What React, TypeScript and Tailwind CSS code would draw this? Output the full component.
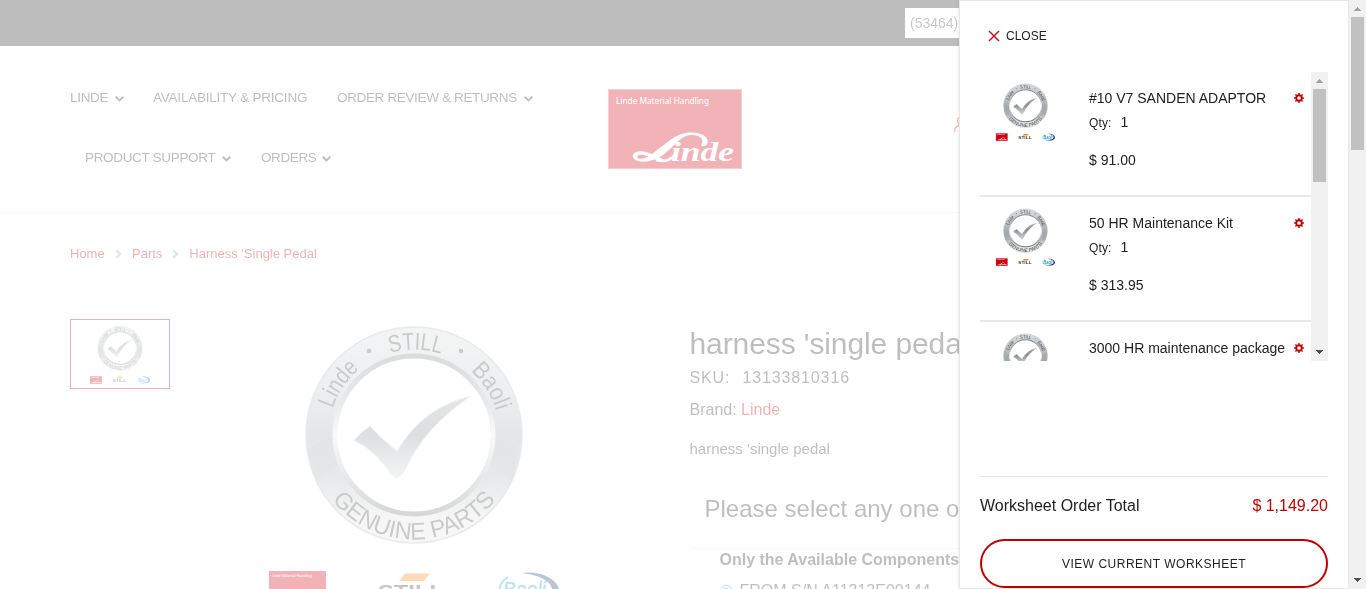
import React from "react";

const sans = "font-['Liberation_Sans',Arial,sans-serif]";

function Defs() {
  return (
    <svg width="0" height="0" className="absolute">
      <defs>
        <linearGradient id="ring" x1="0" y1="0" x2="0" y2="1">
          <stop offset="0" stopColor="#d8dadb" />
          <stop offset="0.3" stopColor="#c3c7ca" />
          <stop offset="0.5" stopColor="#a6abaf" />
          <stop offset="0.7" stopColor="#b0b4b8" />
          <stop offset="0.88" stopColor="#dfe0e0" />
          <stop offset="1" stopColor="#e5e5e5" />
        </linearGradient>
        <linearGradient id="bevel" x1="0" y1="0" x2="0" y2="1">
          <stop offset="0" stopColor="#86888a" />
          <stop offset="0.3" stopColor="#b4b7b9" />
          <stop offset="0.5" stopColor="#eeeeee" />
          <stop offset="0.75" stopColor="#b4b7b9" />
          <stop offset="1" stopColor="#77797b" />
        </linearGradient>
        <linearGradient id="tick" x1="0" y1="0" x2="0" y2="1">
          <stop offset="0" stopColor="#a9abad" />
          <stop offset="0.45" stopColor="#8c9093" />
          <stop offset="1" stopColor="#d8dadb" />
        </linearGradient>
        <path id="arc-top" d="M0 85.5 A85.5 85.5 0 0 1 0 -85.5 A85.5 85.5 0 0 1 0 85.5" />
        <path id="arc-bottom" d="M-104.5 0 A104.5 104.5 0 0 0 104.5 0" />
      </defs>
    </svg>
  );
}

function LindeMark() {
  return (
    <g>
      <path
        d="M49 61 C58 55 67 45 80 43.5 C94 42.500 101 48 99.500 54 C98.500 58 94 58 93 56 C97 51 93 46 83 46 C73 46 66 58 55 66 C48 71 38 74 30 72 C23 70 23 64 30 62.500 C40 61 50 69 60 72 C54 74.500 46 70 39 67 C33 64.500 29 66 29 68 C30 71 38 70 43 66 Z"
        fill="#fff"
      />
      <path d="M48 71 C56 73.500 62 71 66 67" stroke="#fff" strokeWidth="2.500" fill="none" />
      <text
        x="63"
        y="71.500"
        fill="#fff"
        fontFamily="Liberation Serif, serif"
        fontStyle="italic"
        fontWeight="700"
        fontSize="27"
        textLength="63"
        lengthAdjust="spacingAndGlyphs"
      >
        inde
      </text>
    </g>
  );
}

function LindeLogo() {
  return (
    <svg width="134" height="80" viewBox="0 0 134 80">
      <rect x="0.500" y="0.500" width="133" height="79" fill="#d10010" />
      <rect x="0.500" y="0.500" width="133" height="79" fill="none" stroke="#e55a68" />
      <text
        x="8"
        y="15"
        fill="#fff"
        fontFamily="Noto Sans, sans-serif"
        fontSize="9"
        textLength="93"
        lengthAdjust="spacingAndGlyphs"
      >
        Linde Material Handling
      </text>
      <LindeMark />
    </svg>
  );
}

function Seal({ width, height }: { width: number; height: number }) {
  return (
    <svg width={width} height={height} viewBox="-150 -112 300 290" className="block shrink-0">
      <circle r="108" fill="url(#ring)" stroke="#b4b7b8" strokeWidth="1.500" />
      <path d="M-106 14 L-80 0 L-76 30 L-98 46 Z M106 14 L80 0 L76 30 L98 46 Z" fill="#8e9396" opacity="0.2" />
      <circle r="79" fill="#fff" stroke="url(#bevel)" strokeWidth="5" />
      <path
        d="M-60 5.500 C-54 -2 -50 -4 -44 -9 C-35 1 -26 9 -17 16 C2 -15 25 -31 57 -39 C27 -18 8 1 -8 33 C-13 43 -18 46 -23 39 C-34 24 -44 13 -60 5.500 Z"
        fill="url(#tick)"
        stroke="#d5d7d8"
        strokeWidth="1"
      />
      <g fill="#4b4d4f" fontFamily="Liberation Sans, sans-serif" fontSize="24" textAnchor="middle">
        <text textLength="48" lengthAdjust="spacingAndGlyphs">
          <textPath href="#arc-top" startOffset="34.500%">Linde</textPath>
        </text>
        <text textLength="52" lengthAdjust="spacingAndGlyphs">
          <textPath href="#arc-top" startOffset="50.300%">STILL</textPath>
        </text>
        <text textLength="48" lengthAdjust="spacingAndGlyphs">
          <textPath href="#arc-top" startOffset="66%">Baoli</textPath>
        </text>
        <text textLength="188" lengthAdjust="spacingAndGlyphs">
          <textPath href="#arc-bottom" startOffset="50%">GENUINE PARTS</textPath>
        </text>
        <circle cx="-45" cy="-84" r="2.300" />
        <circle cx="47" cy="-84" r="2.300" />
      </g>
      <g transform="translate(-145.500 135.500) scale(0.43 0.46)">
        <rect width="134" height="80" fill="#d10010" />
        <text x="8" y="15" fill="#fff" fontFamily="Noto Sans, sans-serif" fontSize="9" textLength="93">
          Linde Material Handling
        </text>
        <LindeMark />
      </g>
      <path d="M-15 146 L-9 138.500 H16 L10 146 Z" fill="#f9870f" />
      <text
        x="-36"
        y="163"
        fontFamily="Liberation Sans, sans-serif"
        fontWeight="700"
        fontSize="19"
        fill="#3d3d3d"
        textLength="66"
        lengthAdjust="spacingAndGlyphs"
      >
        STILL
      </text>
      <path
        d="M108 138 C128 135 147 146 145 158 C143 170 112 176 92 166 C112 171 136 167 138 156 C139 147 126 140 108 138 Z"
        fill="#1d3c6e"
      />
      <path d="M92 166 C82 160 84 148 94 142" stroke="#2b9bd6" strokeWidth="2" fill="none" />
      <text
        x="89"
        y="162"
        fontFamily="Liberation Sans, sans-serif"
        fontStyle="italic"
        fontWeight="400"
        fontSize="22"
        fill="#2b9bd6"
        stroke="#2b9bd6"
        strokeWidth="0.500"
        textLength="43"
        lengthAdjust="spacingAndGlyphs"
      >
        Baoli
      </text>
    </svg>
  );
}

function Chevron({ right = false }: { right?: boolean }) {
  return right ? (
    <svg width="7" height="10" viewBox="0 0 7 10" className="mt-px block">
      <path d="M1.200 1.200 L5 5 L1.200 8.800" fill="none" stroke="#a5a5a5" strokeWidth="2.200" />
    </svg>
  ) : (
    <svg width="9" height="6" viewBox="0 0 9 6" className="mt-px block">
      <path d="M0.700 0.800 L4.500 4.500 L8.300 0.800" fill="none" stroke="#272727" strokeWidth="1.900" />
    </svg>
  );
}

function NavItem({ label, width, menu = true }: { label: string; width: string; menu?: boolean }) {
  return (
    <a className="flex h-[60px] items-center gap-[7px] whitespace-nowrap text-[13.500px] text-[#272727]">
      <span className={width}>{label}</span>
      {menu && <Chevron />}
    </a>
  );
}

function Arrow({ up = false, color }: { up?: boolean; color: string }) {
  return (
    <svg width="17" height="17" viewBox="0 0 17 17" className="block shrink-0" shapeRendering="crispEdges">
      <path d={up ? "M8 7h1v1h1v1h1v1h1v1H5v-1h1V9h1V8h1z" : "M5 6h7v1h-1v1h-1v1H9v1H8v-1H7V8H6V7H5z"} fill={color} />
    </svg>
  );
}

function Gear() {
  return (
    <svg width="10" height="10" viewBox="-5 -5 10 10" className="block">
      <circle r="2.800" fill="none" stroke="#c00000" strokeWidth="1.900" />
      <g stroke="#c00000" strokeWidth="1.400">
        <path d="M0 -4.900V-3M0 4.900V3M-4.900 0H-3M4.900 0H3M-3.600 -3.600L-2.300 -2.300M3.600 -3.600L2.300 -2.300M-3.600 3.600L-2.300 2.300M3.600 3.600L2.300 2.300" />
      </g>
    </svg>
  );
}

const items = [
  { name: "#10 V7 SANDEN ADAPTOR", qty: 1, price: "$ 91.00" },
  { name: "50 HR Maintenance Kit", qty: 1, price: "$ 313.95" },
  { name: "3000 HR maintenance package", qty: 1, price: "$ 744.25" },
];

function Drawer() {
  return (
    <aside className="absolute top-0 right-0 flex h-[589px] w-[390px] flex-col border border-[#e8e8e8] bg-white pr-5 pl-5 text-[#222] shadow-[0_0_3px_rgba(0,0,0,0.12)]">
      <button className="mt-[25px] flex h-5 items-center gap-[6.5px] self-start pl-[7.5px] text-[12px]">
        <svg width="12" height="12" viewBox="0 0 12 12">
          <path d="M1 1 L11 11 M11 1 L1 11" stroke="#c4161c" strokeWidth="1.500" />
        </svg>
        <span>CLOSE</span>
      </button>
      <div className="mt-[26px] flex h-[289px] w-[348px] shrink-0">
        <div className="h-full w-[331px] overflow-hidden">
          {items.map((it) => (
            <div key={it.name} className="flex h-[125px] border-b-2 border-[#e8e8e8]">
              <div className="w-[109px] pt-[11px] pl-[15px]">
                <Seal width={61} height={59} />
              </div>
              <div className="flex-1 whitespace-nowrap">
                <div className="mt-[17px] text-[14px] leading-[18px]">{it.name}</div>
                <div className="mt-[7px] flex gap-[9px] text-[12px] leading-[17px]">
                  <span className="mt-px tracking-[0.15px]">Qty:</span>
                  <span className="text-[14px]">{it.qty}</span>
                </div>
                <div className="mt-[19px] text-[14px] leading-[18px]">{it.price}</div>
              </div>
              <div className="pt-[21px] pr-[7px]">
                <Gear />
              </div>
            </div>
          ))}
        </div>
        <div className="flex w-[17px] flex-col items-center bg-[#f1f1f1]">
          <Arrow up color="#a3a3a3" />
          <div className="h-[93px] w-[13px] bg-[#c1c1c1]" />
          <div className="flex-1" />
          <Arrow color="#505050" />
        </div>
      </div>
      <div className="mt-[115px] flex justify-between border-t border-[#e8e8e8] pt-[19px] text-[16px] leading-5">
        <span>Worksheet Order Total</span>
        <span className="text-[#c00000]">$ 1,149.20</span>
      </div>
      <button className="mt-[23px] h-[49px] shrink-0 rounded-full border-2 border-[#c00000] text-[12px] tracking-[0.5px]">
        VIEW CURRENT WORKSHEET
      </button>
    </aside>
  );
}

export default function App() {
  return (
    <div className={`flex h-[589px] w-[1366px] overflow-hidden bg-white ${sans}`}>
      <Defs />
      <div className="relative h-full w-[1349px] overflow-hidden">
        <div className="flex h-full flex-col opacity-30">
          <div className="flex h-[46px] shrink-0 bg-[#222] pl-[905px] pt-2">
            <div className="flex h-[30px] w-[360px] items-center bg-white pl-[5px] text-[14px] text-[#444]">
              (53464)
            </div>
          </div>
          <header className="flex h-[167px] shrink-0 border-b border-[#e5e5e5] pl-[70px]">
            <nav className="w-[538px] pt-[22px]">
              <div className="flex gap-[29px]">
                <NavItem label="LINDE" width="w-[38px] tracking-[-0.3px]" />
                <NavItem label="AVAILABILITY & PRICING" width="w-[155px] tracking-[-0.22px]" menu={false} />
                <NavItem label="ORDER REVIEW & RETURNS" width="w-[180px] tracking-[-0.35px]" />
              </div>
              <div className="flex gap-[30px] pl-[15px]">
                <NavItem label="PRODUCT SUPPORT" width="w-[130px] tracking-[-0.33px]" />
                <NavItem label="ORDERS" width="w-[54px] tracking-[-0.4px]" />
              </div>
            </nav>
            <div className="pt-[43px]">
              <LindeLogo />
            </div>
            <svg width="16" height="18" viewBox="0 0 16 18" className="mt-[70px] ml-[212px]">
              <g fill="none" stroke="#d9281e" strokeWidth="1.300">
                <circle cx="7" cy="4.500" r="3.500" />
                <path d="M0.700 16 V14 C1 11 3.500 9.500 7 9.500 C11 9.500 13 11 13.300 14 V16" />
              </g>
            </svg>
          </header>
          <div className="flex h-[80px] shrink-0 items-center gap-[10px] pt-px pl-[70px] text-[13px] text-[#c00000]">
            <span className="w-[35px]">Home</span>
            <Chevron right />
            <span>Parts</span>
            <Chevron right />
            <span>Harness 'Single Pedal</span>
          </div>
          <div className="flex pl-[70px] pt-[26px]">
            <div className="flex h-[70px] w-[100px] justify-center border border-[#c00000] pt-[5px]">
              <Seal width={62} height={60} />
            </div>
            <div className="w-[519px] pt-1 pl-[94px]">
              <Seal width={300} height={290} />
            </div>
            <div className="w-[640px] shrink-0 pl-[0.5px] whitespace-nowrap text-[#272727]">
              <h1 className="mt-[7px] text-[30px] leading-9">
                <span className="tracking-[-0.1px]">harness 'single pedal</span>
              </h1>
              <div className="mt-[6px] flex gap-3 text-[16px] leading-5 tracking-[0.88px]">
                <span>SKU:</span>
                <span>13133810316</span>
              </div>
              <div className="mt-3 text-[16px] leading-5">
                Brand: <span className="text-[#c00000]">Linde</span>
              </div>
              <div className="mt-[19px] text-[15px] leading-5">harness 'single pedal</div>
              <h2 className="mt-[35px] pl-[15px] text-[24px] leading-[29px]">Please select any one of</h2>
              <div className="mt-[25px] border-t border-[#e5e5e5] pl-[30px]">
                <div className="mt-px text-[16px] leading-5 font-bold">Only the Available Components</div>
                <div className="mt-[11px] flex items-center gap-[7px] text-[16px] leading-5">
                  <span className="flex h-[13px] w-[13px] items-center justify-center rounded-full border border-[#0075ff]">
                    <span className="h-[7px] w-[7px] rounded-full bg-[#0075ff]" />
                  </span>
                  FROM S/N A11313E00144
                </div>
              </div>
            </div>
          </div>
        </div>
        <Drawer />
      </div>
      <div className="flex h-full w-[17px] flex-col items-center bg-[#f1f1f1]">
        <Arrow up color="#a3a3a3" />
        <div className="h-[133px] w-[13px] bg-[#c1c1c1]" />
        <div className="flex-1" />
        <Arrow color="#505050" />
      </div>
    </div>
  );
}
